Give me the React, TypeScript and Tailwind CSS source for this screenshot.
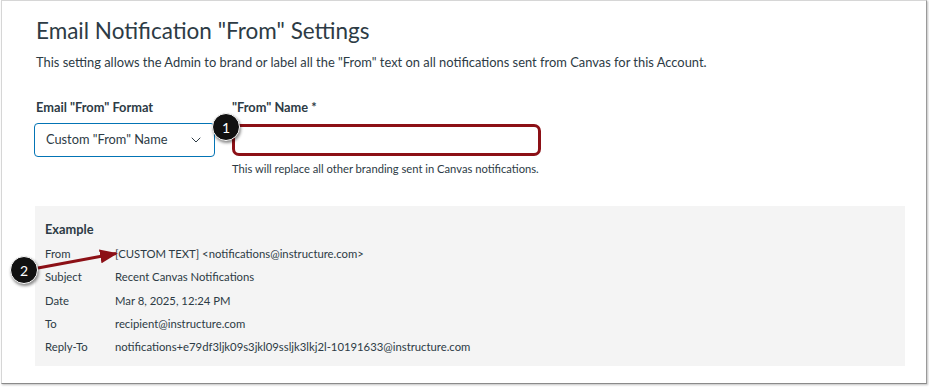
import React from 'react';
import { ChevronDown } from 'lucide-react';

const rows: { label: string; value: string }[] = [
  { label: 'From', value: '[CUSTOM TEXT] <notifications@instructure.com>' },
  { label: 'Subject', value: 'Recent Canvas Notifications' },
  { label: 'Date', value: 'Mar 8, 2025, 12:24 PM' },
  { label: 'To', value: 'recipient@instructure.com' },
  { label: 'Reply-To', value: 'notifications+e79df3ljk09s3jkl09ssljk3lkj2l-10191633@instructure.com' },
];

const Callout: React.FC<{ n: number; className: string }> = ({ n, className }) => (
  <div
    className={`absolute flex h-[28px] w-[28px] items-center justify-center rounded-full border border-white bg-[#111] text-[14px] text-white shadow-[1px_2px_3px_rgba(0,0,0,0.45)] ${className}`}
  >
    {n}
  </div>
);

const App: React.FC = () => {
  return (
    <div className="h-[387px] w-[929px] bg-white font-['Lato','Liberation_Sans',sans-serif] text-[#2d3b45]">
      <div className="relative ml-[1px] h-[384px] w-[926px] border border-[#d6d6d6] border-r-[#9a9a9a] border-b-[#8a8a8a] bg-white shadow-[1px_1px_2px_rgba(0,0,0,0.25)]">
        {/* Header */}
        <div className="px-[34px] pt-[13px]">
          <h1 className="text-[22.5px] leading-[34px] text-[#2d3b45]">Email Notification "From" Settings</h1>
          <p className="mt-[5px] text-[12.9px] leading-[18px]">
            This setting allows the Admin to brand or label all the "From" text on all notifications sent from Canvas for this Account.
          </p>
        </div>

        {/* Form */}
        <div className="mt-[27px] flex gap-[17px] px-[32px]">
          <div className="flex flex-col">
            <label className="pl-[2px] text-[12.8px] font-bold leading-[18px]">Email "From" Format</label>
            <div className="mt-[7px] flex h-[34px] w-[181px] items-center justify-between rounded-[4px] border border-[#0374b5] bg-white pl-[11px] pr-[10px] text-[12.8px]">
              <span>Custom "From" Name</span>
              <ChevronDown className="h-[16px] w-[16px] text-[#2d3b45]" strokeWidth={1.5} />
            </div>
          </div>
          <div className="flex flex-col">
            <label className="text-[12.8px] font-bold leading-[18px]">"From" Name *</label>
            <div className="mt-[8px] h-[32px] w-[309px] rounded-[7px] border-[3px] border-[#8c1016] bg-white" />
            <p className="mt-[6px] text-[11.2px] leading-[14px]">This will replace all other branding sent in Canvas notifications.</p>
          </div>
        </div>

        {/* Example */}
        <div className="ml-[33px] mr-[21px] mt-[30px] h-[160px] bg-[#f4f4f4] px-[10px] pt-[14px]">
          <div className="text-[12.8px] font-bold leading-[18px]">Example</div>
          <div className="mt-[5px] flex flex-col">
            {rows.map((r) => (
              <div key={r.label} className="flex h-[23.3px] items-center text-[11.3px]">
                <span className="w-[70px] shrink-0">{r.label}</span>
                <span>{r.value}</span>
              </div>
            ))}
          </div>
        </div>

        {/* Annotations */}
        <svg className="pointer-events-none absolute left-0 top-0" width="926" height="384">
          <defs>
            <marker id="ah" markerWidth="18" markerHeight="14" refX="16" refY="7" orient="auto" markerUnits="userSpaceOnUse">
              <path d="M0,0 L18,7 L0,14 z" fill="#8c1016" />
            </marker>
          </defs>
          <path d="M36,267 L114,252.5" stroke="#8c1016" strokeWidth="3" markerEnd="url(#ah)" />
        </svg>
        <Callout n={1} className="left-[210px] top-[112px]" />
        <Callout n={2} className="left-[8px] top-[255px]" />
      </div>
    </div>
  );
};

export default App;
